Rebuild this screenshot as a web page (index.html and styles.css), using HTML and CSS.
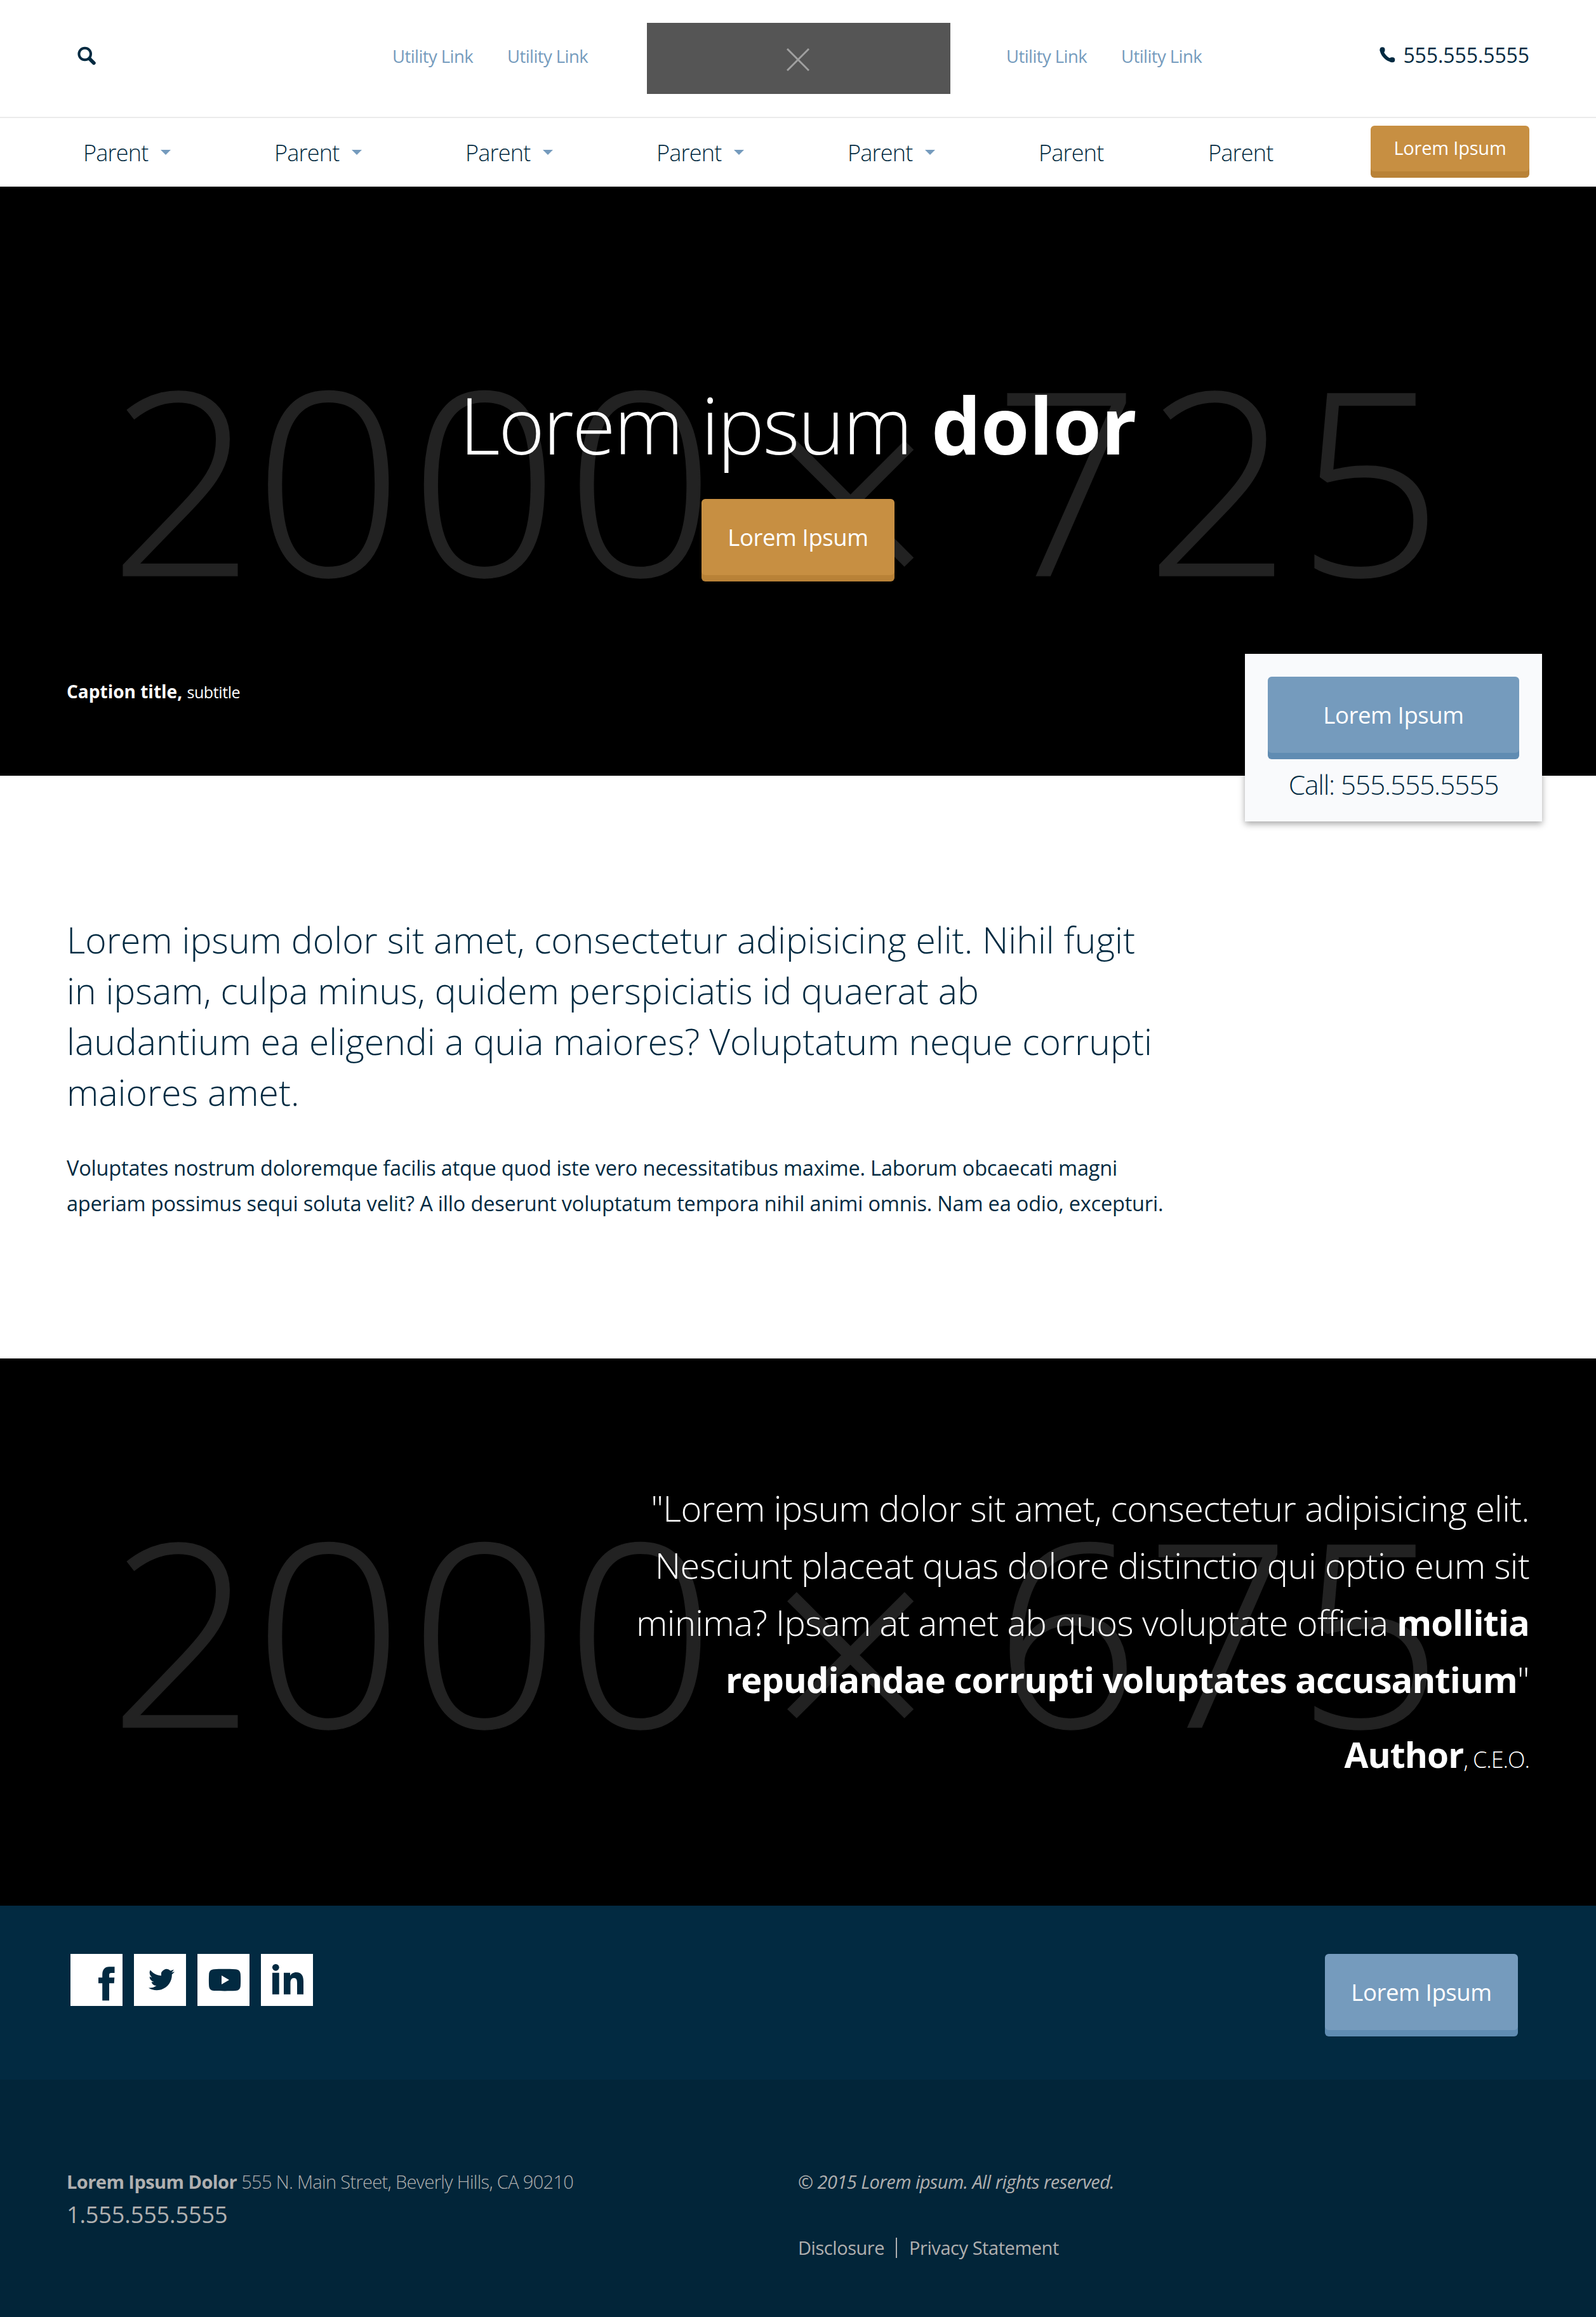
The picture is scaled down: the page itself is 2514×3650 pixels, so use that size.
FILE: index.html
```html
<!DOCTYPE html>
<html lang="en">
<head>
<meta charset="utf-8">
<title>Lorem Ipsum</title>
<link rel="stylesheet" href="styles.css">
</head>
<body>
<header class="topbar">
  <a class="search" aria-label="Search"><svg width="30" height="30" viewBox="0 0 30 30" fill="none" stroke="currentColor"><circle cx="11.7" cy="12" r="9.3" stroke-width="4"/><path d="M19.5 20l6.300 6.200" stroke-width="5.800" stroke-linecap="round"/></svg></a>
  <nav class="utility utility-left"><a>Utility Link</a><a>Utility Link</a></nav>
  <div class="logo"><svg width="36" height="36" viewBox="0 0 36 36" stroke="#a0a0a0" stroke-width="3"><path d="M1 1l34 34M35 1L1 35"/></svg></div>
  <nav class="utility utility-right"><a>Utility Link</a><a>Utility Link</a></nav>
  <a class="phone"><svg width="25" height="25" viewBox="0 0 25 25" fill="none" stroke="currentColor" stroke-linecap="round"><path d="M3.400 5C4 12 12 20.500 19 21" stroke-width="5.500"/><path d="M4.500 4.200v.8M19.500 20.300h.8" stroke-width="8"/></svg><span>555.555.5555</span></a>
</header>
<nav class="mainnav">
  <a class="item drop">Parent</a>
  <a class="item drop">Parent</a>
  <a class="item drop">Parent</a>
  <a class="item drop">Parent</a>
  <a class="item drop">Parent</a>
  <a class="item">Parent</a>
  <a class="item last">Parent</a>
  <a class="btn btn-gold btn-small">Lorem Ipsum</a>
</nav>
<section class="hero">
  <div class="dims" aria-hidden="true"><span class="d-a">2<em>000</em></span><span class="d-x">×</span><span class="d-b">725</span></div>
  <h1><span class="thin">Lorem ipsum</span> <b>dolor</b></h1>
  <a class="btn btn-gold">Lorem Ipsum</a>
  <p class="caption"><b>Caption title,</b> <span>subtitle</span></p>
  <aside class="card">
    <a class="btn btn-blue">Lorem Ipsum</a>
    <p class="call">Call: 555.555.5555</p>
  </aside>
</section>
<main class="copy">
  <p class="lead">Lorem ipsum dolor sit amet, consectetur adipisicing elit. Nihil fugit<br>in ipsam, culpa minus, quidem perspiciatis id quaerat ab<br>laudantium ea eligendi a quia maiores? Voluptatum neque corrupti<br>maiores amet.</p>
  <p class="body">Voluptates nostrum doloremque facilis atque quod iste vero necessitatibus maxime. Laborum obcaecati magni<br>aperiam possimus sequi soluta velit? A illo deserunt voluptatum tempora nihil animi omnis. Nam ea odio, excepturi.</p>
</main>
<section class="testimonial">
  <div class="dims" aria-hidden="true"><span class="d-a">2<em>000</em></span><span class="d-x">×</span><span class="d-b">675</span></div>
  <blockquote>"Lorem ipsum dolor sit amet, consectetur adipisicing elit.<br>Nesciunt placeat quas dolore distinctio qui optio eum sit<br>minima? Ipsam at amet ab quos voluptate officia <b>mollitia</b><br><b>repudiandae corrupti voluptates accusantium</b>"</blockquote>
  <p class="author"><b>Author</b><span>, C.E.O.</span></p>
</section>
<footer>
  <div class="social-bar">
    <div class="social">
      <a aria-label="Facebook"><svg viewBox="0 0 82 82"><path d="M50.200 73.500V46.300H44v-9h6.200v-4.800c0-8 4-12.300 10.800-12.300h8.500v9.700h-5c-2.700 0-3.500 1-3.500 3.400v4h8.300l-.6 9H61v27.200z"/></svg></a>
      <a aria-label="Twitter"><svg viewBox="0 0 82 82"><path transform="translate(23 20.100) scale(1.708)" d="M23.953 4.570a10 10 0 01-2.825.775 4.958 4.958 0 002.163-2.723c-.951.555-2.005.959-3.127 1.184a4.920 4.920 0 00-8.384 4.482C7.690 8.095 4.067 6.130 1.640 3.162a4.822 4.822 0 00-.666 2.475c0 1.710.87 3.213 2.188 4.096a4.904 4.904 0 01-2.228-.616v.06a4.923 4.923 0 003.946 4.827 4.996 4.996 0 01-2.212.085 4.936 4.936 0 004.604 3.417 9.867 9.867 0 01-6.102 2.105c-.39 0-.779-.023-1.170-.067a13.995 13.995 0 007.557 2.209c9.053 0 13.998-7.496 13.998-13.985 0-.21 0-.42-.015-.63A9.935 9.935 0 0024 4.590z"/></svg></a>
      <a aria-label="YouTube"><svg viewBox="0 0 82 82"><path fill-rule="evenodd" d="M26 24.200c9-.5 22-.5 34 0 5 .3 7.500 3 7.800 7.500.4 6 .4 13 0 19-.4 4.500-3 7-7.800 7.300-10 .5-24 .5-34 0-4.800-.3-7.400-2.800-7.800-7.300-.4-6-.4-13 0-19 .4-4.700 3-7.200 7.800-7.500zM38 34v14l12-7z"/></svg></a>
      <a aria-label="LinkedIn"><svg viewBox="0 0 82 82"><circle cx="23.300" cy="21.300" r="5.400"/><path d="M18 29.800h10.700v34H18zM36 29.800h10v4.600c1.700-3 5-5.400 9.600-5.400C64 29 67 34.500 67 43.500v20.300H57V46c0-5-1-8-5-8s-5.500 3-5.500 8v17.800H36z"/></svg></a>
    </div>
    <a class="btn btn-blue">Lorem Ipsum</a>
  </div>
  <div class="legal">
    <div class="col">
      <p class="address"><b>Lorem Ipsum Dolor</b> <span>555 N. Main Street, Beverly Hills, CA 90210</span></p>
      <p class="tel">1.555.555.5555</p>
    </div>
    <div class="col">
      <p class="rights"><i>© 2015 Lorem ipsum. All rights reserved.</i></p>
      <p class="links"><a>Disclosure</a><span class="bar"></span><a>Privacy Statement</a></p>
    </div>
  </div>
</footer>
</body>
</html>
```
FILE: styles.css
```css
* { box-sizing: border-box; margin: 0; padding: 0; }
body { width: 2514px; background: #fff; color: #022a41; font-family: "Open Sans", "Noto Sans", sans-serif; font-size: 34px; font-weight: 400; white-space: nowrap; }
svg { display: block; }
b { font-weight: 700; }

/* Header */
.topbar { display: flex; align-items: center; height: 186px; padding: 0 105px 0 122px; border-bottom: 2px solid #ebebeb; }
.search { width: 30px; padding-bottom: 8px; }
.utility { display: flex; gap: 54px; padding-bottom: 8px; font-size: 27.5px; letter-spacing: -.58px; color: #759bbd; }
.utility a { width: 127px; }
.utility-left { margin-left: 466px; }
.logo { display: flex; align-items: center; justify-content: center; width: 478px; height: 112px; margin: 0 88px 0 93px; background: #555; }
.logo svg { margin: 4px 2px 0 0; }
.phone { display: flex; align-items: center; gap: 12px; margin-left: auto; padding-bottom: 12px; font-size: 32px; letter-spacing: -.1px; }

/* Main navigation */
.mainnav { display: flex; align-items: center; height: 108px; padding: 0 105px 0 131px; }
.item { display: flex; flex: none; align-items: center; gap: 20px; width: 267px; font-size: 36px; font-weight: 300; letter-spacing: -.8px; }
.item.drop { width: 301px; }
.item.last { width: auto; }
.drop::after { content: ""; border: 8px solid transparent; border-top-color: #759bbd; border-bottom: 0; }

/* Buttons */
.btn { display: block; flex: none; width: 304px; height: 120px; margin-bottom: 10px; border-radius: 6px; line-height: 120px; font-size: 36.500px; letter-spacing: -.4px; color: #fff; text-align: center; }
.btn-gold { background: #c78f42; box-shadow: 0 10px #b98237; }
.btn-blue { background: #759bbd; box-shadow: 0 10px #608cb2; }
.btn-small { width: 250px; height: 72px; margin-left: auto; margin-bottom: 12px; line-height: 70px; font-size: 29px; letter-spacing: -.2px; }

/* Hero */
.hero { position: relative; display: flex; flex-direction: column; align-items: center; height: 928px; padding: 289px 105px 112px; background: #000; color: #fff; }
.hero h1 { position: relative; font-size: 124px; font-weight: 300; line-height: 170px; letter-spacing: -.6px; }
.thin { letter-spacing: -2.300px; }
.hero > .btn { position: relative; margin-top: 33px; }
.caption { align-self: flex-start; margin-top: auto; font-size: 28px; line-height: 40px; }
.caption span { font-size: 25px; letter-spacing: -.4px; }
.dims { position: absolute; inset: 257px 0 auto; font-size: 402px; line-height: 400px; font-weight: 300; color: #222; text-align: left; -webkit-text-stroke: 1.500px #222; }
.dims span { position: absolute; top: 0; letter-spacing: 9px; }
.dims em { display: inline-block; font-style: normal; transform: scaleX(1.03); }
.dims .d-a { left: 172px; }
.dims .d-x { left: 1210px; top: 27px; font-size: 455px; }
.dims .d-b { left: 1566px; }
.card { position: absolute; left: 1961px; top: 736px; width: 468px; height: 264px; padding: 36px; background: #f9fafc; color: #022a41; box-shadow: 0 4px 10px rgba(0, 0, 0, .35); text-align: center; }
.card .btn { width: auto; }
.call { font-size: 42.500px; font-weight: 300; line-height: 80px; letter-spacing: -1.200px; }

/* Intro copy */
.copy { height: 918px; padding: 218px 105px 0; }
.lead { font-size: 57px; font-weight: 300; line-height: 80px; letter-spacing: .03px; }
.body { margin-top: 52px; font-size: 32.500px; line-height: 56px; letter-spacing: -.19px; }

/* Testimonial */
.testimonial { position: relative; height: 862px; padding: 190px 105px 0; background: #000; color: #fff; text-align: right; }
.testimonial .dims { top: 225px; }
blockquote { position: relative; font-size: 56px; font-weight: 300; line-height: 90px; letter-spacing: -.63px; }
blockquote b { letter-spacing: -.93px; }
.author { position: relative; margin-top: 29px; font-size: 55px; font-weight: 300; line-height: 90px; letter-spacing: -.9px; }
.author span { font-size: 36px; letter-spacing: -1.100px; }

/* Footer */
.social-bar { display: flex; justify-content: space-between; height: 274px; padding: 76px 123px 0 111px; background: #022a41; }
.social { display: flex; gap: 18px; }
.social a { width: 82px; height: 82px; background: #fff; }
.social svg { width: 82px; height: 82px; fill: #022a41; }
.legal { display: grid; grid-template-columns: 1152px 1fr; height: 374px; padding: 136px 105px 0; background: #022539; color: #b0b0b0; font-size: 29px; line-height: 50px; letter-spacing: -.55px; }
.address span { font-weight: 300; letter-spacing: -.67px; }
.tel { font-size: 36px; line-height: 54px; letter-spacing: -.1px; }
.links { display: flex; align-items: center; margin-top: 54px; letter-spacing: -.45px; }
.bar { width: 2px; height: 32px; margin: 0 19px 0 18px; background: #b0b0b0; }
```
